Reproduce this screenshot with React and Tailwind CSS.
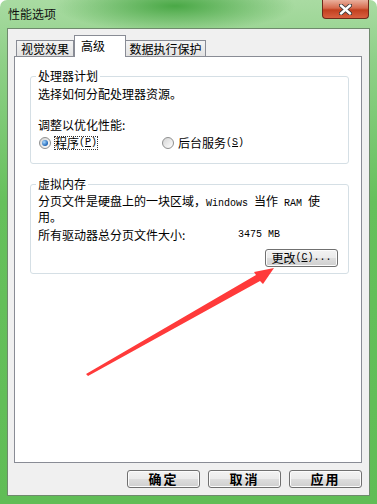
import React from "react";

const mono = "font-['Liberation_Mono',monospace] text-[10px]";

function Radio({ checked }) {
  return (
    <span className="flex h-[12px] w-[12px] shrink-0 items-center justify-center rounded-full border border-[#8e8f8f] bg-[linear-gradient(135deg,#d4d4d4,#ffffff)]">
      {checked && (
        <span className="h-[6px] w-[6px] rounded-full bg-[radial-gradient(circle_at_35%_35%,#a8d8ff,#1c63b5_70%)]" />
      )}
    </span>
  );
}

function GroupBox({ title, className, children }) {
  return (
    <div className={`relative w-[319px] rounded-[3px] border border-[#d5dfe5] pl-[7px] ${className}`}>
      <span className="absolute -top-[7px] left-[5px] bg-white px-[2px] leading-[12px]">{title}</span>
      {children}
    </div>
  );
}

function Button({ children, className }) {
  return (
    <button className={`flex h-[18px] w-[73px] items-center justify-center rounded-[3px] border border-[#707070] bg-[linear-gradient(180deg,#f3f3f3_0%,#ebebeb_48%,#dddddd_52%,#cfcfcf_100%)] shadow-[inset_0_0_0_1px_#fcfcfc] ${className}`}>
      {children}
    </button>
  );
}

export default function App() {
  return (
    <div className="relative h-[504px] w-[377px] overflow-hidden rounded-t-[7px] bg-[image:linear-gradient(180deg,#a9dba2_0%,#8fd088_12%,#66c05c_40%,#60bd56_100%)] font-['Noto_Sans_CJK_SC',sans-serif] text-[12px] leading-[12px] text-black">
      {/* title bar */}
      <div className="flex h-[28px] items-start justify-between bg-[image:radial-gradient(ellipse_120px_26px_at_175px_6px,#4aa846,transparent)]">
        <span className="pl-[8px] pt-[8px] leading-[12px] text-[#111]">性能选项</span>
        <div className="mr-[8px] flex h-[19px] w-[47px] items-center justify-center rounded-b-[4px] border border-t-0 border-[#6e2a1a] bg-[linear-gradient(180deg,#eab09d_0%,#d66a4d_45%,#c2401f_55%,#d9603f_100%)]">
          <svg width="13" height="11" viewBox="0 0 13 11">
            <path d="M2 1.5 L11 9.5 M11 1.5 L2 9.5" stroke="#3a3a3a" strokeWidth="4.2" strokeLinecap="round" />
            <path d="M2 1.5 L11 9.5 M11 1.5 L2 9.5" stroke="#ffffff" strokeWidth="2.4" strokeLinecap="round" />
          </svg>
        </div>
      </div>

      {/* client area */}
      <div className="mx-[7px] flex h-[468px] flex-col border border-[#6f8a6d] bg-[#f0f0f0] pt-[6px]">
        {/* tabs */}
        <div className="flex h-[21px] items-end pl-[8px]">
          <div className="flex h-[16px] w-[58px] items-center justify-center border border-b-0 border-[#898c95] bg-[linear-gradient(180deg,#f4f4f4,#e2e2e2)] leading-[14px]">
            视觉效果
          </div>
          <div className="relative z-10 -mb-px flex h-[22px] w-[52px] items-start border border-b-0 border-[#898c95] bg-white pl-[6px] pt-[4px] leading-[12px]">
            高级
          </div>
          <div className="flex h-[16px] w-[80px] items-center justify-center border border-b-0 border-l-0 border-[#898c95] bg-[linear-gradient(180deg,#f4f4f4,#e2e2e2)] leading-[14px]">
            数据执行保护
          </div>
        </div>

        {/* panel */}
        <div className="ml-[6px] h-[407px] w-[348px] border border-[#898c95] bg-white pl-[15px] pt-[19px]">
          <GroupBox title="处理器计划" className="h-[88px] pt-[11px]">
            <div>选择如何分配处理器资源。</div>
            <div className="mt-[19px]">调整以优化性能:</div>
            <div className="mt-[5px] flex h-[14px] items-center">
              <span className="ml-[1px]">
                <Radio checked />
              </span>
              <span className="ml-[3px] flex h-[14px] items-center border border-dotted border-[#333]">
                程序
                <span className={mono}>
                  (<span className="underline">P</span>)
                </span>
              </span>
              <span className="ml-[64px]">
                <Radio />
              </span>
              <span className="ml-[4px] flex items-center">
                后台服务
                <span className={mono}>
                  {" "}(<span className="underline">S</span>)
                </span>
              </span>
            </div>
          </GroupBox>

          <GroupBox title="虚拟内存" className="mt-[20px] h-[90px] pt-[9px]">
            <div className="leading-[13px]">
              分页文件是硬盘上的一块区域，<span className={mono}>Windows </span>当作<span className={mono}> RAM </span>使
              <br />
              用。
            </div>
            <div className="mt-[6px] flex">
              <span className="w-[200px]">所有驱动器总分页文件大小:</span>
              <span className={mono}>3475 MB</span>
            </div>
            <div className="mt-[8px] flex justify-end pr-[10px]">
              <Button>
                更改<span className={mono}>(<span className="underline">C</span>)...</span>
              </Button>
            </div>
          </GroupBox>
        </div>

        {/* bottom buttons */}
        <div className="mt-[7px] flex justify-end gap-[8px] pr-[7px]">
          <Button className="text-[13px] font-bold tracking-[2px]">确定</Button>
          <Button className="text-[13px] font-bold tracking-[2px]">取消</Button>
          <Button className="text-[13px] font-bold tracking-[2px]">应用</Button>
        </div>
      </div>

      {/* red annotation arrow */}
      <svg className="pointer-events-none absolute left-0 top-0 z-20" width="377" height="504" viewBox="0 0 377 504">
        <polygon
          points="86,374 256,275 254,272 274,268 263,284 260,281 88,376"
          fill="#ff3a3a"
        />
      </svg>
    </div>
  );
}
